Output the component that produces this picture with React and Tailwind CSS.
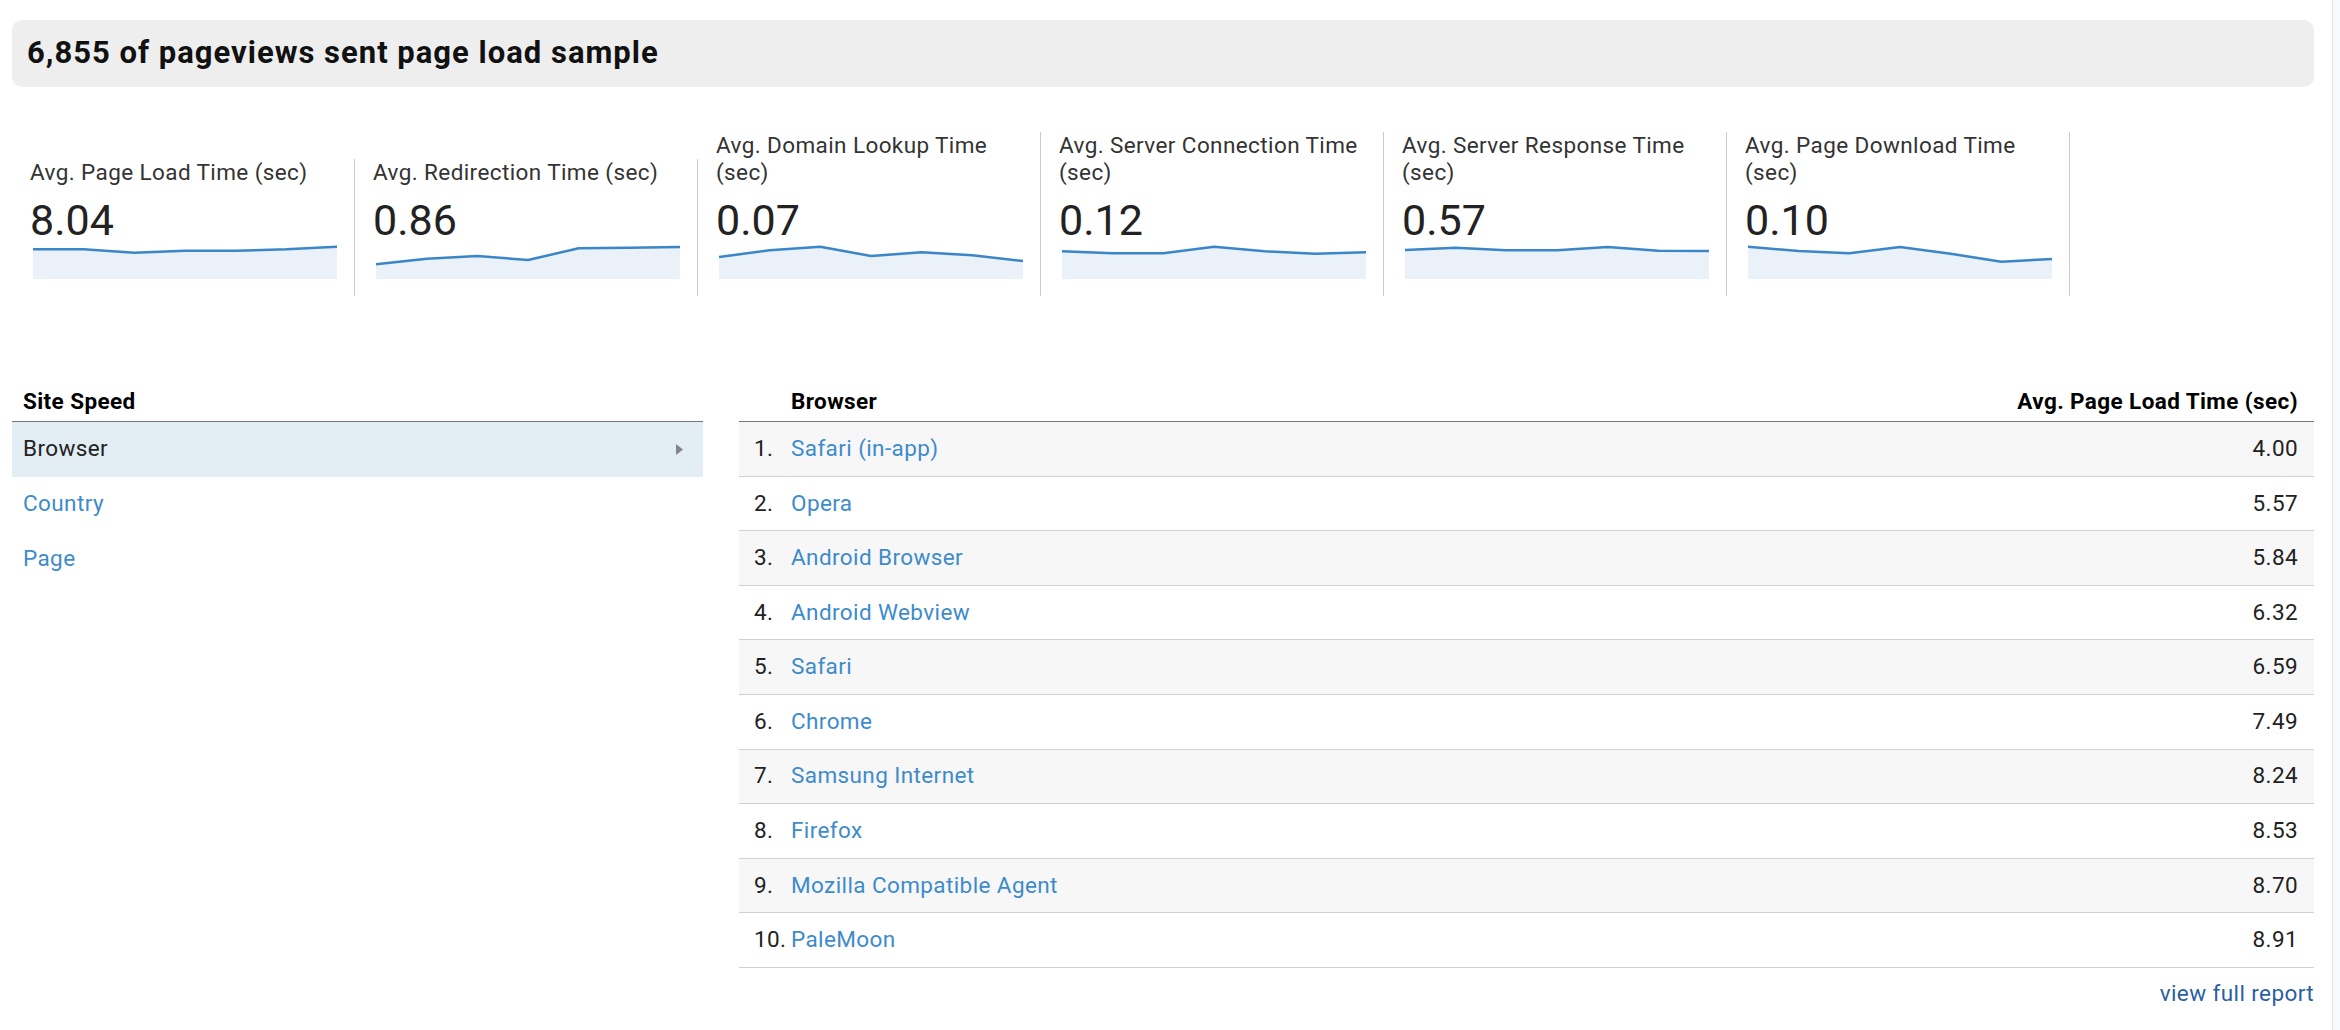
import React from 'react';

const metrics = [
  { label: 'Avg. Page Load Time (sec)', value: '8.04', spark: [5.3, 5.3, 8.7, 6.7, 6.7, 5.3, 2.7] },
  { label: 'Avg. Redirection Time (sec)', value: '0.86', spark: [20.3, 14.7, 12, 16, 4.3, 3.7, 3] },
  { label: 'Avg. Domain Lookup Time (sec)', value: '0.07', spark: [13, 6.3, 2.7, 12, 8.3, 11.3, 17] },
  { label: 'Avg. Server Connection Time (sec)', value: '0.12', spark: [7.3, 9.3, 9.3, 2.7, 7.3, 9.7, 8.3] },
  { label: 'Avg. Server Response Time (sec)', value: '0.57', spark: [6, 3.7, 6.3, 6.3, 3, 6.7, 7] },
  { label: 'Avg. Page Download Time (sec)', value: '0.10', spark: [2.7, 7, 9.3, 3, 9.7, 17.7, 15] },
];

const browsers = [
  ['Safari (in-app)', '4.00'],
  ['Opera', '5.57'],
  ['Android Browser', '5.84'],
  ['Android Webview', '6.32'],
  ['Safari', '6.59'],
  ['Chrome', '7.49'],
  ['Samsung Internet', '8.24'],
  ['Firefox', '8.53'],
  ['Mozilla Compatible Agent', '8.70'],
  ['PaleMoon', '8.91'],
];

function Sparkline({ points }) {
  const w = 304;
  const h = 35;
  const step = w / (points.length - 1);
  const line = points.map((y, i) => `${(i * step).toFixed(1)},${y}`).join(' ');
  const area = `0,${h} ${line} ${w},${h}`;
  return (
    <svg width={w} height={h} viewBox={`0 0 ${w} ${h}`} className="block ml-[3px]">
      <polygon points={area} fill="#eaf1f9" />
      <polyline points={line} fill="none" stroke="#3a86c8" strokeWidth="2.5" strokeLinejoin="round" />
    </svg>
  );
}

function Metric({ label, value, spark }) {
  return (
    <div className="w-[343px] shrink-0 border-r border-[#cccccc] pl-[18px] pr-[17px] pb-[17px]">
      <div className="text-[22.5px] leading-[27px] tracking-[0.4px] text-[#333333]">{label}</div>
      <div className="mt-[10px] text-[43px] leading-[48px] text-[#222222]">{value}</div>
      <Sparkline points={spark} />
    </div>
  );
}

export default function App() {
  return (
    <div className="flex min-h-screen bg-white font-['Roboto',sans-serif] text-[#222222]">
      <div className="flex-1 pl-[12px] pr-[18px] pt-[20px]">
        {/* sample banner */}
        <div className="flex h-[67px] items-center rounded-[10px] bg-[#eeeeee] pl-[15px]">
          <h1 className="text-[31px] font-bold tracking-[1px] text-[#111111]">
            6,855 of pageviews sent page load sample
          </h1>
        </div>

        {/* metric tiles */}
        <div className="mt-[45px] flex items-end">
          {metrics.map((m) => (
            <Metric key={m.label} {...m} />
          ))}
        </div>

        {/* site speed + browser table */}
        <div className="mt-[92px] flex gap-[36px] text-[22.5px] tracking-[0.4px]">
          <div className="w-[691px] shrink-0">
            <div className="border-b border-[#777777] pb-[6px] pl-[11px] font-bold leading-[27px] text-black">
              Site Speed
            </div>
            <div className="flex h-[54.6px] items-center justify-between bg-[#e2edf4] pl-[11px] pr-[20px] text-[#222222]">
              <span>Browser</span>
              <svg width="7" height="11" viewBox="0 0 7 11">
                <polygon points="0,0 7,5.5 0,11" fill="#858585" />
              </svg>
            </div>
            <div className="flex h-[54.6px] items-center pl-[11px] text-[#3d8bcb]">Country</div>
            <div className="flex h-[54.6px] items-center pl-[11px] text-[#3d8bcb]">Page</div>
          </div>

          <div className="flex-1">
            <div className="flex justify-between border-b border-[#777777] pb-[6px] pl-[52px] pr-[16px] font-bold leading-[27px] text-black">
              <span>Browser</span>
              <span>Avg. Page Load Time (sec)</span>
            </div>
            {browsers.map(([name, val], i) => (
              <div
                key={name}
                className={`flex h-[54.6px] items-center border-b border-[#d0d0d0] pr-[16px] ${
                  i % 2 === 0 ? 'bg-[#f7f7f7]' : 'bg-white'
                }`}
              >
                <span className="w-[52px] shrink-0 pl-[15px] text-[#222222]">{i + 1}.</span>
                <span className="flex-1 text-[#3d8bcb]">{name}</span>
                <span className="text-[#222222]">{val}</span>
              </div>
            ))}
            <div className="mt-[12px] text-right leading-[27px] text-[#2b5fa3]">view full report</div>
          </div>
        </div>
      </div>
      <div className="w-[8px] shrink-0 border-l border-[#e6e6e6] bg-[#f8f9fa]" />
    </div>
  );
}
